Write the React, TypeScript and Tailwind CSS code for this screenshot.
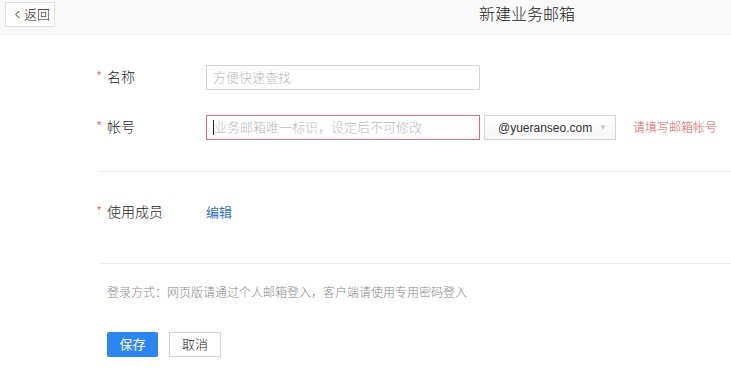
import { ChevronLeft } from "lucide-react";

const font = "font-['Liberation_Sans','Noto_Sans_CJK_SC',sans-serif]";

function Label({ text }: { text: string }) {
  return (
    <div className="flex w-[109px] items-center">
      <span className="w-[10px] text-[11px] leading-none text-[#e0595f] -mt-[5px]">*</span>
      <span className="text-[14px] font-light text-[#222]">{text}</span>
    </div>
  );
}

export default function App() {
  return (
    <div className={`${font} h-[373px] w-[731px] overflow-hidden bg-white`}>
      <div className="flex h-[35px] items-start border-b border-[#f0f0f0] bg-[#f9f9f9]">
        <button className="ml-[5px] mt-[2px] flex h-[25px] w-[50px] items-center border border-[#e0e0e0] bg-white pl-[6px] text-[13px] font-light text-[#222]">
          <ChevronLeft className="h-[13px] w-[13px] -ml-[1px]" strokeWidth={1.8} />
          <span>返回</span>
        </button>
        <div className="ml-[424px] mt-[5px] text-[16px] font-light leading-[20px] text-[#222]">新建业务邮箱</div>
      </div>

      <div className="pl-[97px]">
        <div className="mt-[30px] flex h-[25px] items-center">
          <Label text="名称" />
          <input
            className="h-[25px] w-[274px] border border-[#d5d5d5] px-[6px] text-[13px] font-light outline-none placeholder:text-[#bbb]"
            placeholder="方便快速查找"
          />
        </div>

        <div className="mt-[25px] flex h-[25px] items-center">
          <Label text="帐号" />
          <div className="flex h-[25px] w-[274px] items-center border border-[#d9707f] px-[6px]">
            <span className="h-[15px] w-px bg-[#222]" />
            <span className="text-[13px] font-light text-[#bbb]">业务邮箱唯一标识，设定后不可修改</span>
          </div>
          <div className="ml-[4px] flex h-[25px] w-[132px] items-center justify-between border border-[#d5d5d5] bg-gradient-to-b from-white to-[#f6f6f6] pl-[13px] pr-[8px]">
            <span className="text-[12px] text-[#333]">@yueranseo.com</span>
            <span className="text-[8px] text-[#c8c8c8]">▼</span>
          </div>
          <span className="ml-[17px] text-[12px] font-light text-[#e05a5a]">请填写邮箱帐号</span>
        </div>

        <div className="ml-[3px] mt-[31px] h-px bg-[#ececec]" />

        <div className="mt-[28px] flex h-[25px] items-center">
          <Label text="使用成员" />
          <span className="text-[13px] text-[#2f6fc0]">编辑</span>
        </div>

        <div className="ml-[3px] mt-[38px] h-px bg-[#ececec]" />

        <div className="mt-[21px] pl-[10px] text-[12px] font-light leading-[16px] text-[#888]">
          登录方式：网页版请通过个人邮箱登入，客户端请使用专用密码登入
        </div>

        <div className="mt-[31px] flex gap-[11px] pl-[10px]">
          <button className="h-[25px] w-[51px] rounded-[2px] bg-[#2b86f0] text-[13px] text-white">保存</button>
          <button className="h-[25px] w-[52px] border border-[#d5d5d5] bg-white text-[13px] font-light text-[#222]">取消</button>
        </div>
      </div>
    </div>
  );
}
